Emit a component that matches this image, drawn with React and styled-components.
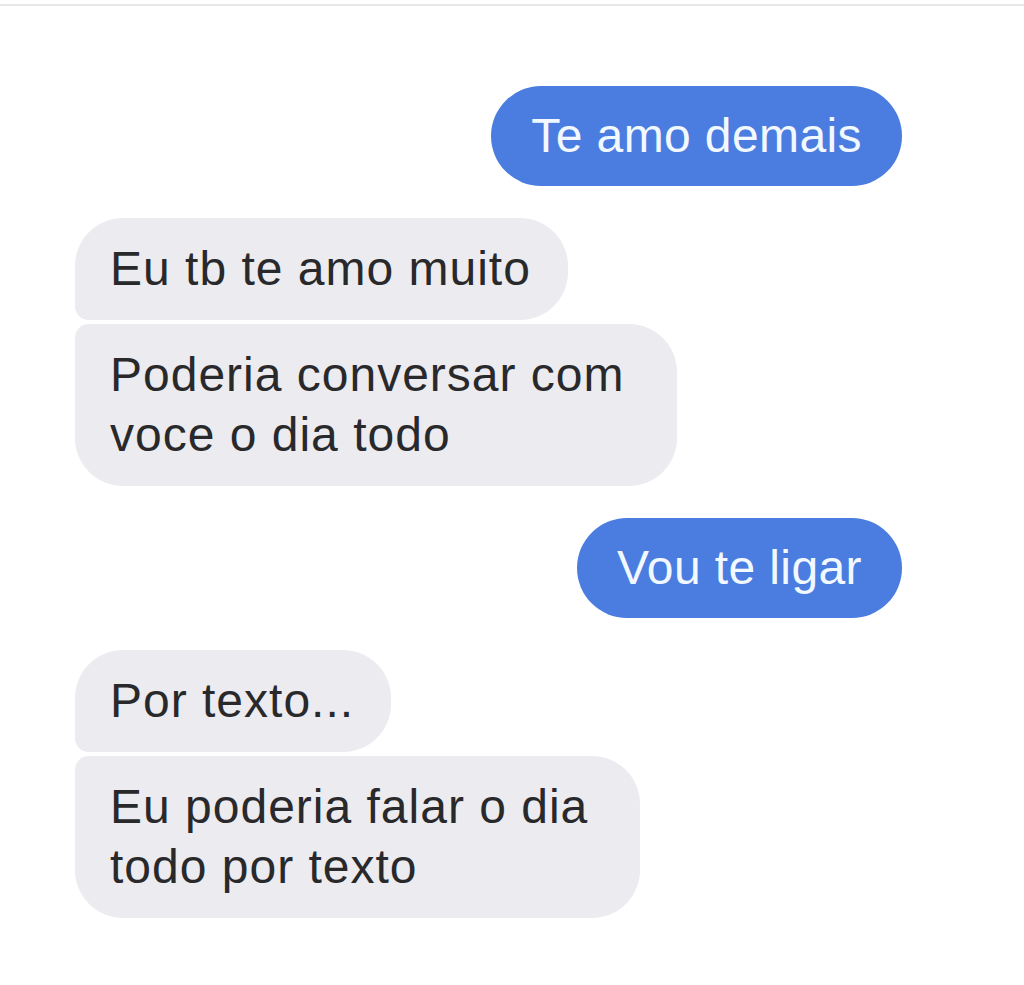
import React from "react";
import styled, { createGlobalStyle } from "styled-components";

const GlobalStyle = createGlobalStyle`
  html, body {
    margin: 0;
    padding: 0;
    background: #ffffff;
  }
  body {
    font-family: "Liberation Sans", Arial, Helvetica, sans-serif;
  }
`;

const Page = styled.div`
  width: 1024px;
  min-height: 985px;
  padding-top: 4px;
  background: #ffffff;
`;

const TopRule = styled.div`
  height: 2px;
  background: #e7e7e9;
`;

const Thread = styled.div`
  display: flex;
  flex-direction: column;
  gap: 32px;
  padding: 80px 122px 0 75px;
`;

const Group = styled.div`
  display: flex;
  flex-direction: column;
  align-items: ${(p) => (p.$out ? "flex-end" : "flex-start")};
  gap: 4px;
`;

const Bubble = styled.div`
  font-size: 48px;
  line-height: 60px;
  white-space: nowrap;
`;

const Sent = styled(Bubble)`
  background: #4a7ddf;
  color: #f2f8ff;
  letter-spacing: 0.4px;
  padding: 20px 40px;
  border-radius: 50px;
`;

const Received = styled(Bubble)`
  background: #ebebf0;
  color: #29292b;
  letter-spacing: 1px;
  padding: 21px ${(p) => (p.$multi ? "52px" : "37px")} 21px 35px;
  border-radius: ${(p) =>
    p.$first ? "48px 48px 48px 14px" : "14px 48px 48px 48px"};
`;

const messages = [
  { out: true, lines: [["Te amo demais"]] },
  {
    out: false,
    lines: [["Eu tb te amo muito"], ["Poderia conversar com", "voce o dia todo"]],
  },
  { out: true, lines: [["Vou te ligar"]] },
  {
    out: false,
    lines: [["Por texto..."], ["Eu poderia falar o dia", "todo por texto"]],
  },
];

const App = () => {
  return (
    <Page>
      <GlobalStyle />
      <TopRule />
      <Thread>
        {messages.map((m, i) => (
          <Group key={i} $out={m.out}>
            {m.lines.map((text, j) =>
              m.out ? (
                <Sent key={j}>{text[0]}</Sent>
              ) : (
                <Received key={j} $first={j === 0} $multi={text.length > 1}>
                  {text.map((t, k) => (
                    <React.Fragment key={k}>
                      {k > 0 && <br />}
                      {t}
                    </React.Fragment>
                  ))}
                </Received>
              )
            )}
          </Group>
        ))}
      </Thread>
    </Page>
  );
};

export default App;
